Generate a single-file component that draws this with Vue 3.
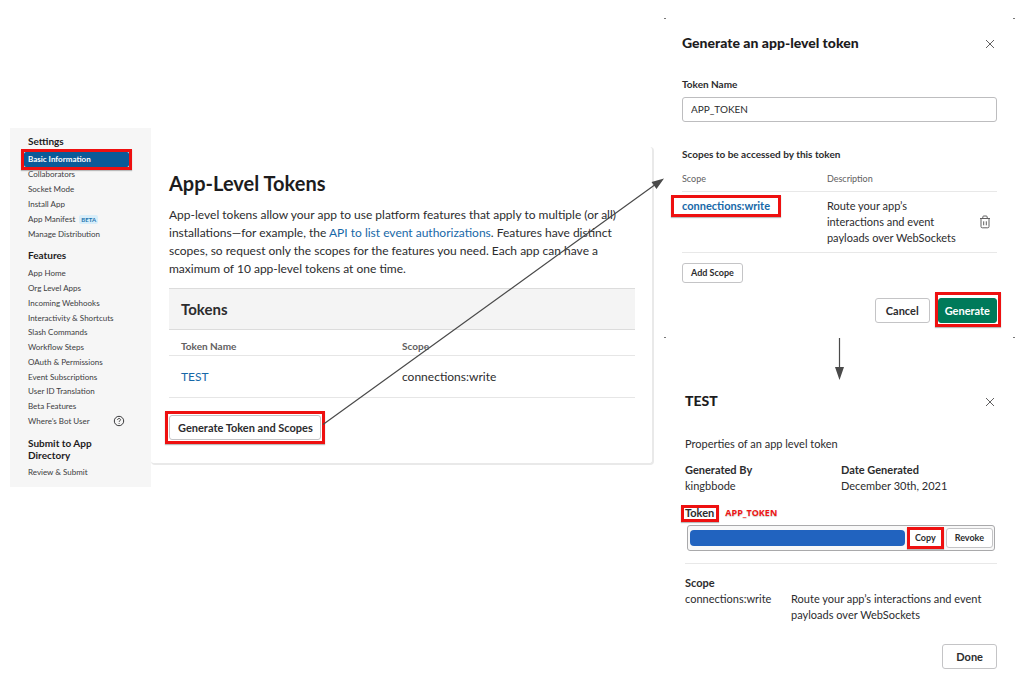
<script setup>
import { ref } from 'vue'

const tokenName = ref('APP_TOKEN')
const settings = [
  { label: 'Basic Information', active: true },
  { label: 'Collaborators' },
  { label: 'Socket Mode' },
  { label: 'Install App' },
  { label: 'App Manifest', badge: 'BETA' },
  { label: 'Manage Distribution' },
]
const features = [
  { label: 'App Home' },
  { label: 'Org Level Apps' },
  { label: 'Incoming Webhooks' },
  { label: 'Interactivity & Shortcuts' },
  { label: 'Slash Commands' },
  { label: 'Workflow Steps' },
  { label: 'OAuth & Permissions' },
  { label: 'Event Subscriptions' },
  { label: 'User ID Translation' },
  { label: 'Beta Features' },
  { label: 'Where’s Bot User', help: true },
]
</script>

<template>
  <main class="board">
    <nav class="sidebar">
      <h2>Settings</h2>
      <ul class="settings">
        <li v-for="item in settings" :key="item.label" :class="{ active: item.active, marked: item.active }">
          <a href="#">{{ item.label }}</a>
          <span v-if="item.badge" class="beta">{{ item.badge }}</span>
        </li>
      </ul>
      <h2>Features</h2>
      <ul class="features">
        <li v-for="item in features" :key="item.label">
          <a href="#">{{ item.label }}</a>
          <svg v-if="item.help" class="help" viewBox="0 0 12 12" width="12" height="12" aria-hidden="true">
            <circle cx="6" cy="6" r="4.7" />
            <path d="M4.6 4.9c0-1.9 2.9-1.9 2.9-.1 0 1-1.4 1-1.4 2M6.1 8.1v.8" />
          </svg>
        </li>
      </ul>
      <h2>Submit to App Directory</h2>
      <ul>
        <li><a href="#">Review &amp; Submit</a></li>
      </ul>
    </nav>

    <section class="card">
      <h1>App-Level Tokens</h1>
      <p>
        App-level tokens allow your app to use platform features that apply to multiple (or all)
        installations—for example, the <a href="#">API to list event authorizations</a>. Features have distinct
        scopes, so request only the scopes for the features you need. Each app can have a maximum of 10 app-level
        tokens at one time.
      </p>
      <h2>Tokens</h2>
      <table class="tokens">
        <thead>
          <tr><th>Token Name</th><th>Scope</th></tr>
        </thead>
        <tbody>
          <tr><td><a href="#">TEST</a></td><td>connections:write</td></tr>
        </tbody>
      </table>
      <span class="marked generate-mark"><button type="button" class="btn wide">Generate Token and Scopes</button></span>
    </section>

    <div class="dialogs">
      <section class="dialog create">
        <i class="corner tl"></i><i class="corner tr"></i><i class="corner bl"></i><i class="corner br"></i>
        <header>
          <h2>Generate an app-level token</h2>
          <button type="button" class="close" aria-label="Close">
            <svg viewBox="0 0 10 10" width="10" height="10"><path d="M1 1l8 8M9 1l-8 8" /></svg>
          </button>
        </header>
        <label for="token-name">Token Name</label>
        <input id="token-name" v-model="tokenName" type="text" />
        <h3>Scopes to be accessed by this token</h3>
        <table class="scopes">
          <thead>
            <tr><th>Scope</th><th>Description</th><th></th></tr>
          </thead>
          <tbody>
            <tr>
              <td><a href="#" class="marked scope-mark">connections:write</a></td>
              <td>Route your app’s interactions and event payloads over WebSockets</td>
              <td class="action">
                <button type="button" class="trash" aria-label="Remove scope">
                  <svg viewBox="0 0 12 14" width="12" height="14">
                    <path d="M1 3.5h10M3.8 3.2V2q0-1 1-1h2.4q1 0 1 1v1.2M2 3.8v7.7q0 1.3 1.3 1.3h5.4q1.3 0 1.3-1.3V3.8M4.7 6.3v4M7.3 6.3v4" />
                  </svg>
                </button>
              </td>
            </tr>
          </tbody>
        </table>
        <button type="button" class="btn add">Add Scope</button>
        <footer>
          <button type="button" class="btn">Cancel</button>
          <span class="marked primary-mark"><button type="button" class="btn primary">Generate</button></span>
        </footer>
      </section>

      <section class="dialog details">
        <header>
          <h2>TEST</h2>
          <button type="button" class="close" aria-label="Close">
            <svg viewBox="0 0 10 10" width="10" height="10"><path d="M1 1l8 8M9 1l-8 8" /></svg>
          </button>
        </header>
        <p class="intro">Properties of an app level token</p>
        <dl class="pair">
          <div><dt>Generated By</dt><dd>kingbbode</dd></div>
          <div><dt>Date Generated</dt><dd>December 30th, 2021</dd></div>
        </dl>
        <div class="token-title">
          <strong class="marked token-mark">Token</strong><span class="note">APP_TOKEN</span>
        </div>
        <div class="token-box">
          <span class="secret"></span>
          <span class="marked copy-mark"><button type="button" class="btn small copy">Copy</button></span>
          <button type="button" class="btn small">Revoke</button>
        </div>
        <hr />
        <h3>Scope</h3>
        <div class="scope-line">
          <span>connections:write</span>
          <span>Route your app’s interactions and event payloads over WebSockets</span>
        </div>
        <footer><button type="button" class="btn">Done</button></footer>
      </section>
    </div>

    <svg class="arrows" viewBox="0 0 1021 679" preserveAspectRatio="none" aria-hidden="true">
      <path class="line" d="M323 424.500L656 184M839.500 338V368" />
      <path class="head" d="M664 178.500L656.500 189L651.500 182ZM835 367H844L839.500 380Z" />
    </svg>
  </main>
</template>

<style>
body {
  margin: 0;
  background: #fff;
}
</style>

<style scoped>
.board {
  position: relative;
  display: grid;
  grid-template-columns: 141px minmax(0, 503fr) minmax(0, 361fr);
  align-items: start;
  box-sizing: border-box;
  min-height: 100vh;
  padding: 0 6px 0 10px;
  color: #2c2c2e;
  font-family: Lato, "Liberation Sans", sans-serif;
  font-size: 11px;
  line-height: 16px;
}
h1, h2, h3, p, ul, dl, dd {
  margin: 0;
  padding: 0;
}
ul {
  list-style: none;
}
a {
  color: #1768a8;
  text-decoration: none;
}
button, input {
  box-sizing: border-box;
  font-family: inherit;
  color: inherit;
}
.marked {
  position: relative;
}
.marked::after {
  content: "";
  position: absolute;
  inset: -3px;
  border: 3px solid #ee1010;
  box-shadow: 0 1px 1px #bbb;
  pointer-events: none;
}

.sidebar {
  box-sizing: border-box;
  margin-top: 128px;
  padding: 7px 22px 7px 14px;
  background: #f6f6f6;
}
.sidebar h2 {
  padding: 0 4px;
  font-size: 10px;
  line-height: 12px;
  font-weight: 700;
  color: #1d1c1d;
}
.sidebar ul {
  display: flex;
  flex-direction: column;
  margin-bottom: 7px;
  font-size: 8px;
  line-height: 15px;
}
.sidebar ul:last-child {
  margin: 4px 0 0;
}
.sidebar li {
  flex: 1;
  display: flex;
  align-items: center;
  padding: 0 4px;
}
.sidebar li a {
  color: #3c3c3e;
}
.sidebar .settings {
  margin-top: 5px;
}
.sidebar .features {
  min-height: 162px;
  margin: 5px 0 9px;
  line-height: 14px;
}
.sidebar li.active {
  background: #0b5a98;
  border-radius: 2px;
}
.sidebar li.active a {
  color: #fff;
  font-weight: 700;
}
.sidebar .beta {
  margin-left: 4px;
  padding: 0 2px;
  border-radius: 2px;
  background: #d8eefa;
  color: #1c74ae;
  font-size: 6px;
  line-height: 9px;
  font-weight: 700;
}
.help {
  margin-left: auto;
  fill: none;
  stroke: #3a3a3c;
  stroke-width: 1;
}

.card {
  margin-top: 147px;
  padding: 23px 17px 23px 18px;
  border: solid #e9e9e9;
  border-width: 0 2px 2px 0;
  border-radius: 4px;
}
.card h1 {
  font-size: 20px;
  line-height: 26px;
  font-weight: 700;
  color: #1d1c1d;
}
.card p {
  margin-top: 10px;
  font-size: 12px;
  line-height: 18px;
}
.card h2 {
  margin-top: 10px;
  padding: 0 12px;
  border: solid #dcdcdc;
  border-width: 1px 0;
  background: #f4f4f4;
  font-size: 15px;
  line-height: 40px;
}
table {
  width: 100%;
  border-collapse: collapse;
  text-align: left;
}
.tokens th, .tokens td {
  padding: 0 12px;
  border-bottom: 1px solid #e6e6e6;
}
.tokens th:last-child, .tokens td:last-child {
  width: 50%;
  padding-left: 0;
}
.tokens tr > th {
  padding-top: 8px;
  padding-bottom: 1px;
  font-size: 10px;
  color: #616061;
}
.tokens td {
  height: 41px;
  font-size: 12px;
}
.btn {
  height: 25px;
  padding: 0 10px;
  border: 1px solid #c4c4c6;
  border-radius: 3px;
  background: #fff;
  font-size: 11px;
  line-height: 16px;
  font-weight: 700;
  white-space: nowrap;
}
.btn.wide {
  padding: 0 7px 0 8px;
}
.generate-mark {
  display: inline-flex;
  margin-top: 17px;
}
.generate-mark::after {
  inset: -4px;
}

.dialog {
  position: relative;
  padding: 0 18px;
}
.dialogs {
  margin-left: 10px;
}
.dialog header {
  display: flex;
  align-items: center;
  justify-content: space-between;
}
.dialog h2 {
  font-size: 14px;
  line-height: 20px;
  font-weight: 900;
  color: #1d1c1d;
}
.close, .trash {
  display: flex;
  padding: 2px;
  border: 0;
  background: none;
}
.close {
  padding: 4px 2px 2px;
}
.close svg, .trash svg {
  fill: none;
  stroke: #616061;
  stroke-width: 1;
}
.create {
  margin-top: 18px;
  padding-top: 15px;
}
.corner {
  position: absolute;
  width: 2px;
  height: 1px;
  background: #777;
}
.tl { top: 0; left: 0; }
.tr { top: 0; right: 0; }
.bl { bottom: 0; left: 0; }
.br { bottom: 0; right: 0; }
.create label {
  display: block;
  margin-top: 23px;
  font-size: 10px;
  font-weight: 700;
}
.create input {
  display: block;
  width: 100%;
  height: 25px;
  margin-top: 5px;
  padding: 0 8px 2px;
  border: 1px solid #bdbdbf;
  border-radius: 3px;
  font-size: 10px;
}
.create h3 {
  margin-top: 24px;
  font-size: 10px;
}
.scopes {
  table-layout: fixed;
}
.scopes th, .scopes td {
  padding: 0;
  border-bottom: 1px solid #e8e8e8;
  vertical-align: top;
}
.scopes th:nth-child(2) {
  width: 43%;
}
.scopes th:last-child {
  width: 11%;
}
.scopes tr > th {
  padding: 9px 0 4px;
  font-size: 9px;
  font-weight: 400;
  color: #616061;
}
.scopes td {
  padding: 6px 0;
}
.scopes td.action {
  vertical-align: middle;
}
.action .trash {
  margin-left: auto;
  margin-right: 4px;
}
.scope-mark {
  display: inline-block;
  font-weight: 700;
}
.scope-mark::after {
  inset: -3px -11px;
}
.btn.add {
  display: block;
  height: 20px;
  margin-top: 10px;
  padding: 0 8px;
  font-size: 9px;
}
.dialog footer {
  display: flex;
  justify-content: flex-end;
  gap: 8px;
}
.create footer {
  padding: 15px 0;
}
.btn.primary {
  padding: 0 6px;
  border-color: #007a5a;
  background: #007a5a;
  color: #fff;
}
.primary-mark {
  display: flex;
}
.primary-mark::after {
  inset: -6px -4px -4px -3px;
}

.details {
  margin-top: 53px;
  padding-left: 21px;
}
.intro {
  margin-top: 25px;
}
.pair {
  display: grid;
  grid-template-columns: 1fr 1fr;
  margin-top: 10px;
}
dt {
  font-weight: 700;
}
.token-title {
  display: flex;
  align-items: center;
  gap: 11px;
  margin-top: 11px;
}
.token-mark::after {
  inset: 0 -5px -1px -4px;
}
.note {
  font-family: "Open Sans", sans-serif;
  font-size: 9px;
  font-weight: 700;
  color: #f01414;
  text-shadow: 0 1px 1px #ccc;
}
.token-box {
  display: flex;
  align-items: center;
  gap: 3px;
  margin: 4px 2px 0;
  padding: 2px 1px 2px 2px;
  border: 1px solid #a9a9ab;
  border-radius: 3px;
  background: #f8f8f8;
}
.secret {
  flex: 1;
  height: 16px;
  border-radius: 4px;
  background: #2163bf;
}
.btn.small {
  height: 20px;
  padding: 0 8px;
  font-size: 9px;
}
.btn.small.copy {
  padding: 0 6px;
}
.copy-mark {
  display: flex;
}
.copy-mark::after {
  inset: -1px;
}
hr {
  height: 1px;
  margin: 12px 0 11px;
  border: 0;
  background: #e8e8e8;
}
.details h3 {
  font-size: 11px;
}
.scope-line {
  display: grid;
  grid-template-columns: 34% 1fr;
}
.details footer {
  margin-top: 21px;
}
.details footer .btn {
  padding: 0 13px;
}

.arrows {
  position: absolute;
  top: 0;
  left: 0;
  width: 100%;
  height: 679px;
  pointer-events: none;
}
.line {
  fill: none;
  stroke: #4a4a4a;
  stroke-width: 1.2;
}
.head {
  fill: #4a4a4a;
}
</style>
